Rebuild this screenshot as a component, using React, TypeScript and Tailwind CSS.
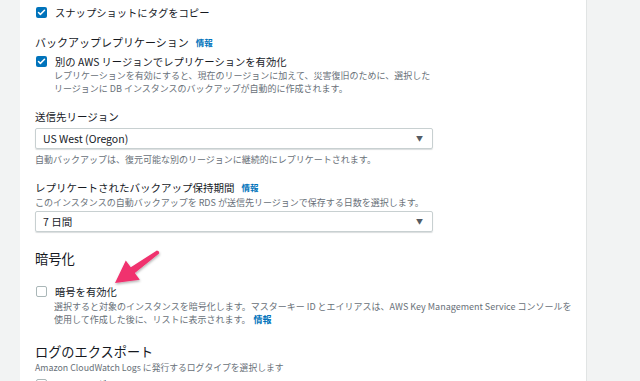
import { Check } from 'lucide-react'

const font = { fontFamily: '"Noto Sans CJK JP", "Noto Sans", sans-serif' }

function Box({ checked }: { checked?: boolean }) {
  return checked ? (
    <span className="w-[11px] h-[11px] rounded-[2px] bg-[#0073bb] flex items-center justify-center shrink-0">
      <Check size={9} strokeWidth={4} className="text-white" />
    </span>
  ) : (
    <span className="w-[11px] h-[11px] rounded-[2px] border border-[#aab7b8] bg-white shrink-0" />
  )
}

function Info() {
  return <span className="ml-[7px] text-[8.5px] font-bold text-[#0073bb]">情報</span>
}

function Select({ value }: { value: string }) {
  return (
    <div className="w-[398px] h-[21px] border border-[#c8d0d1] rounded-[2px] shadow-[0_1px_1px_rgba(0,28,36,0.15)] flex items-center justify-between pl-[7px] pr-[9px]">
      <span className="text-[10.5px] text-[#16191f]">{value}</span>
      <span className="text-[7px] text-[#545b64]">▼</span>
    </div>
  )
}

export default function App() {
  return (
    <div className="w-[640px] h-[381px] overflow-hidden bg-[#f2f3f3] flex" style={font}>
      <div className="ml-[20px] w-[567px] bg-white border-r border-[#e1e4e4] relative">
        <div className="pl-[15px] pt-[5px] flex flex-col items-start text-[#16191f]">
          <div className="h-[15px] flex items-center gap-[8px] pl-[1px]">
            <Box checked />
            <span className="text-[10.3px]">スナップショットにタグをコピー</span>
          </div>

          <div className="mt-[14px] h-[16px] flex items-center">
            <span className="text-[11px]">バックアップレプリケーション</span>
            <Info />
          </div>
          <div className="mt-[4px] h-[15px] flex items-center gap-[8px] pl-[1px]">
            <Box checked />
            <span className="text-[10.3px]">別の AWS リージョンでレプリケーションを有効化</span>
          </div>
          <div className="pl-[19px] text-[9px] leading-[13px] text-[#687078]">
            <div>レプリケーションを有効にすると、現在のリージョンに加えて、災害復旧のために、選択した</div>
            <div>リージョンに DB インスタンスのバックアップが自動的に作成されます。</div>
          </div>

          <div className="mt-[14px] h-[15px] flex items-center text-[10.5px]">送信先リージョン</div>
          <div className="mt-[4px]">
            <Select value="US West (Oregon)" />
          </div>
          <div className="mt-[4px] h-[13px] leading-[13px] text-[9px] text-[#687078]">
            自動バックアップは、復元可能な別のリージョンに継続的にレプリケートされます。
          </div>

          <div className="mt-[14px] h-[15px] flex items-center">
            <span className="text-[10.5px]">レプリケートされたバックアップ保持期間</span>
            <Info />
          </div>
          <div className="mt-[1px] h-[13px] leading-[13px] text-[9px] text-[#687078]">
            このインスタンスの自動バックアップを RDS が送信先リージョンで保存する日数を選択します。
          </div>
          <div className="mt-[2px]">
            <Select value="7 日間" />
          </div>

          <div className="mt-[18px] h-[18px] flex items-center text-[13.3px]">暗号化</div>
          <div className="mt-[16px] h-[15px] flex items-center gap-[8px] pl-[1px]">
            <Box />
            <span className="text-[10.3px]">暗号を有効化</span>
          </div>
          <div className="mt-[1px] pl-[19px] text-[9px] leading-[13px] text-[#687078]">
            <div>選択すると対象のインスタンスを暗号化します。マスターキー ID とエイリアスは、AWS Key Management Service コンソールを</div>
            <div>
              使用して作成した後に、リストに表示されます。
              <span className="ml-[3px] font-bold text-[#0073bb]">情報</span>
            </div>
          </div>

          <div className="mt-[17px] h-[18px] flex items-center text-[13.2px]">ログのエクスポート</div>
          <div className="h-[13px] leading-[13px] text-[8.8px] text-[#687078]">
            Amazon CloudWatch Logs に発行するログタイプを選択します
          </div>
          <div className="mt-[3px] h-[15px] flex items-center gap-[8px] pl-[1px]">
            <Box />
            <span className="text-[10.3px]">エラーログ</span>
          </div>
        </div>

        <svg
          className="absolute left-0 top-0 pointer-events-none"
          width="567"
          height="381"
          viewBox="20 0 567 381"
        >
          <defs>
            <filter id="sh" x="-50%" y="-50%" width="200%" height="200%">
              <feDropShadow dx="0.5" dy="1.5" stdDeviation="1.2" floodColor="#000" floodOpacity="0.3" />
            </filter>
          </defs>
          <path
            d="M115 283 L125.8 260.4 L130.8 267.3 L156.9 250.5 Q159.8 251.2 159.1 253.5 L134.8 272.9 L139.8 279.8 Z"
            fill="#f0306e"
            filter="url(#sh)"
          />
        </svg>
      </div>
    </div>
  )
}
